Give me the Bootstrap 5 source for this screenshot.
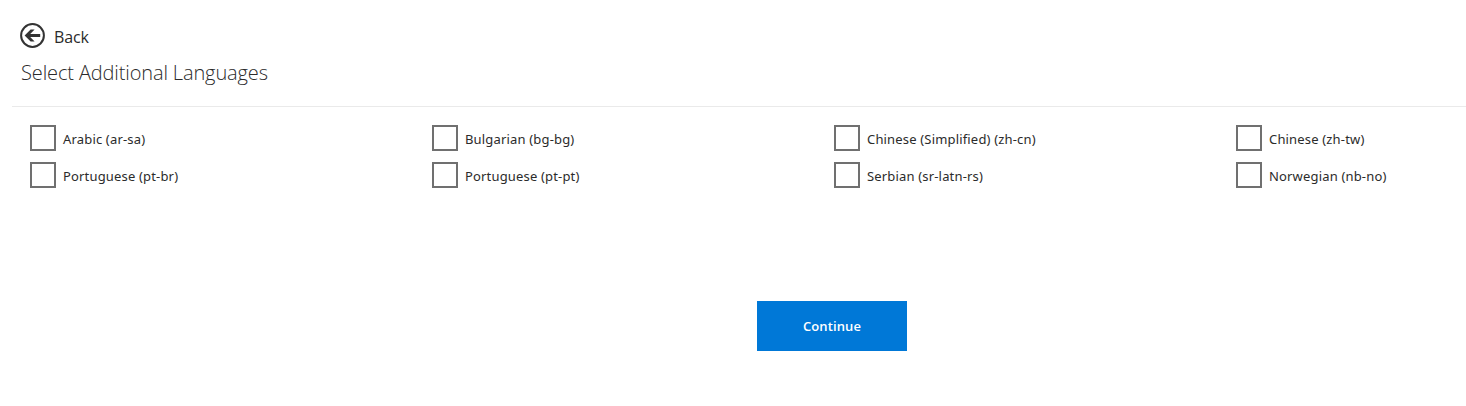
<!DOCTYPE html>
<html lang="en"><head><meta charset="utf-8"><title>Select Additional Languages</title>
<link href="https://cdn.jsdelivr.net/npm/bootstrap@5.3.0/dist/css/bootstrap.min.css" rel="stylesheet">
<style>
body{font-family:"Open Sans","Noto Sans",sans-serif;color:#2b2b2b;background:#fff;height:406px}
.back-link{margin:23px 0 0 20px;color:#2b2b2b;gap:9px;height:25px;width:max-content}
.back-link span{font-size:16px;line-height:25px;padding-top:2px;letter-spacing:-.1px}
.page-title{font:300 20px/28px "Open Sans","Noto Sans",sans-serif;margin:11px 0 0 21px;letter-spacing:-.13px}
.rule{margin:19px 0 0 12px;border-top:1px solid #eaeaea}
.languages{display:grid;grid-template-columns:repeat(3,402px) 1fr;row-gap:11px;margin:18px 0 0 30px}
.lang{height:26px;gap:7px}
.lang .form-check-input{width:26px;height:26px;margin:0;border:2px solid #707070;border-radius:0;flex:none}
.lang span{font-family:"Noto Sans","Open Sans",sans-serif;font-size:13px;line-height:26px;padding-top:1px;letter-spacing:.17px;white-space:nowrap}
.btn-continue,.btn-continue:hover{width:150px;height:50px;margin:113px 0 0 757px;background:#0078d7;color:#fff;border-radius:0;border:0;font-size:13px;font-weight:600;letter-spacing:.1px;padding:2px 0 0}
</style></head><body>
<a href="#" class="back-link d-flex text-decoration-none"><svg width="25" height="25" viewBox="0 0 25 25" fill="none"><circle cx="12.5" cy="12.5" r="11.4" stroke="#333" stroke-width="2"/><path d="M4.6 12.5L10.6 6.5H14.6L10.2 10.9H20.2V14.1H10.2L14.6 18.5H10.6Z" fill="#333"/></svg><span>Back</span></a>
<h1 class="page-title">Select Additional Languages</h1>
<div class="rule"></div>
<div class="languages">
<label class="lang d-flex"><input class="form-check-input" type="checkbox"><span>Arabic (ar-sa)</span></label>
<label class="lang d-flex"><input class="form-check-input" type="checkbox"><span>Bulgarian (bg-bg)</span></label>
<label class="lang d-flex"><input class="form-check-input" type="checkbox"><span>Chinese (Simplified) (zh-cn)</span></label>
<label class="lang d-flex"><input class="form-check-input" type="checkbox"><span>Chinese (zh-tw)</span></label>
<label class="lang d-flex"><input class="form-check-input" type="checkbox"><span>Portuguese (pt-br)</span></label>
<label class="lang d-flex"><input class="form-check-input" type="checkbox"><span>Portuguese (pt-pt)</span></label>
<label class="lang d-flex"><input class="form-check-input" type="checkbox"><span>Serbian (sr-latn-rs)</span></label>
<label class="lang d-flex"><input class="form-check-input" type="checkbox"><span>Norwegian (nb-no)</span></label>
</div>
<button class="btn btn-continue d-block" type="button">Continue</button>
<script src="https://cdn.jsdelivr.net/npm/bootstrap@5.3.0/dist/js/bootstrap.bundle.min.js"></script>
</body></html>
